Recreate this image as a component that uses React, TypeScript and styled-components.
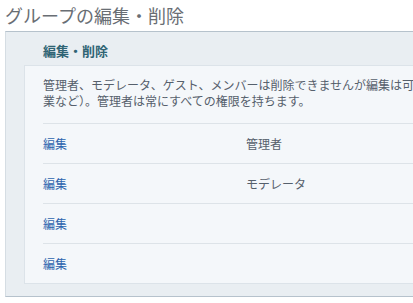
import styled, { createGlobalStyle } from 'styled-components';

const GlobalStyle = createGlobalStyle`
  html, body {
    margin: 0;
    padding: 0;
    overflow: hidden;
    background: #ffffff;
  }

  body {
    font-family: "Noto Sans CJK JP", "Noto Sans", sans-serif;
  }
`;

const Page = styled.div`
  width: 540px;
`;

const Title = styled.h1`
  margin: 0;
  padding-left: 5px;
  height: 31px;
  line-height: 31px;
  font-size: 18px;
  font-weight: 400;
  color: #696e74;
  white-space: nowrap;
`;

const Panel = styled.section`
  margin-left: 5px;
  background: #e9eef2;
  border-top: 1px solid #b6c2cc;
  border-bottom: 1px solid #b6c2cc;
  border-left: 1px solid #d5dde3;
  padding: 0 0 12px 18px;
`;

const PanelHeader = styled.h2`
  margin: 0;
  height: 29px;
  padding-top: 4px;
  line-height: 29px;
  padding-left: 19px;
  font-size: 13px;
  font-weight: 700;
  color: #2f6474;
`;

const InnerBox = styled.div`
  background: #f4f7fa;
  border: 1px solid #dce3e9;
  border-right: none;
  padding-left: 18px;
`;

const Description = styled.p`
  margin: 0;
  padding: 11px 0 14px;
  font-size: 12px;
  line-height: 16px;
  color: #56606c;
`;

const Row = styled.div`
  display: grid;
  grid-template-columns: 203px 1fr;
  align-items: center;
  height: 39px;
  border-top: 1px solid #dde3e8;
  font-size: 12px;
`;

const EditLink = styled.a`
  color: #2c64ae;
  text-decoration: none;
  cursor: pointer;
`;

const RoleName = styled.span`
  color: #56606c;
`;

const groups = ['管理者', 'モデレータ', '', ''];

export default function App() {
  return (
    <Page>
      <GlobalStyle />
      <Title>グループの編集・削除</Title>
      <Panel>
        <PanelHeader>編集・削除</PanelHeader>
        <InnerBox>
          <Description>
            管理者、モデレータ、ゲスト、メンバーは削除できませんが編集は可能
            <br />
            業など）。管理者は常にすべての権限を持ちます。
          </Description>
          {groups.map((name, i) => (
            <Row key={i}>
              <EditLink href="#">編集</EditLink>
              <RoleName>{name}</RoleName>
            </Row>
          ))}
        </InnerBox>
      </Panel>
    </Page>
  );
}
